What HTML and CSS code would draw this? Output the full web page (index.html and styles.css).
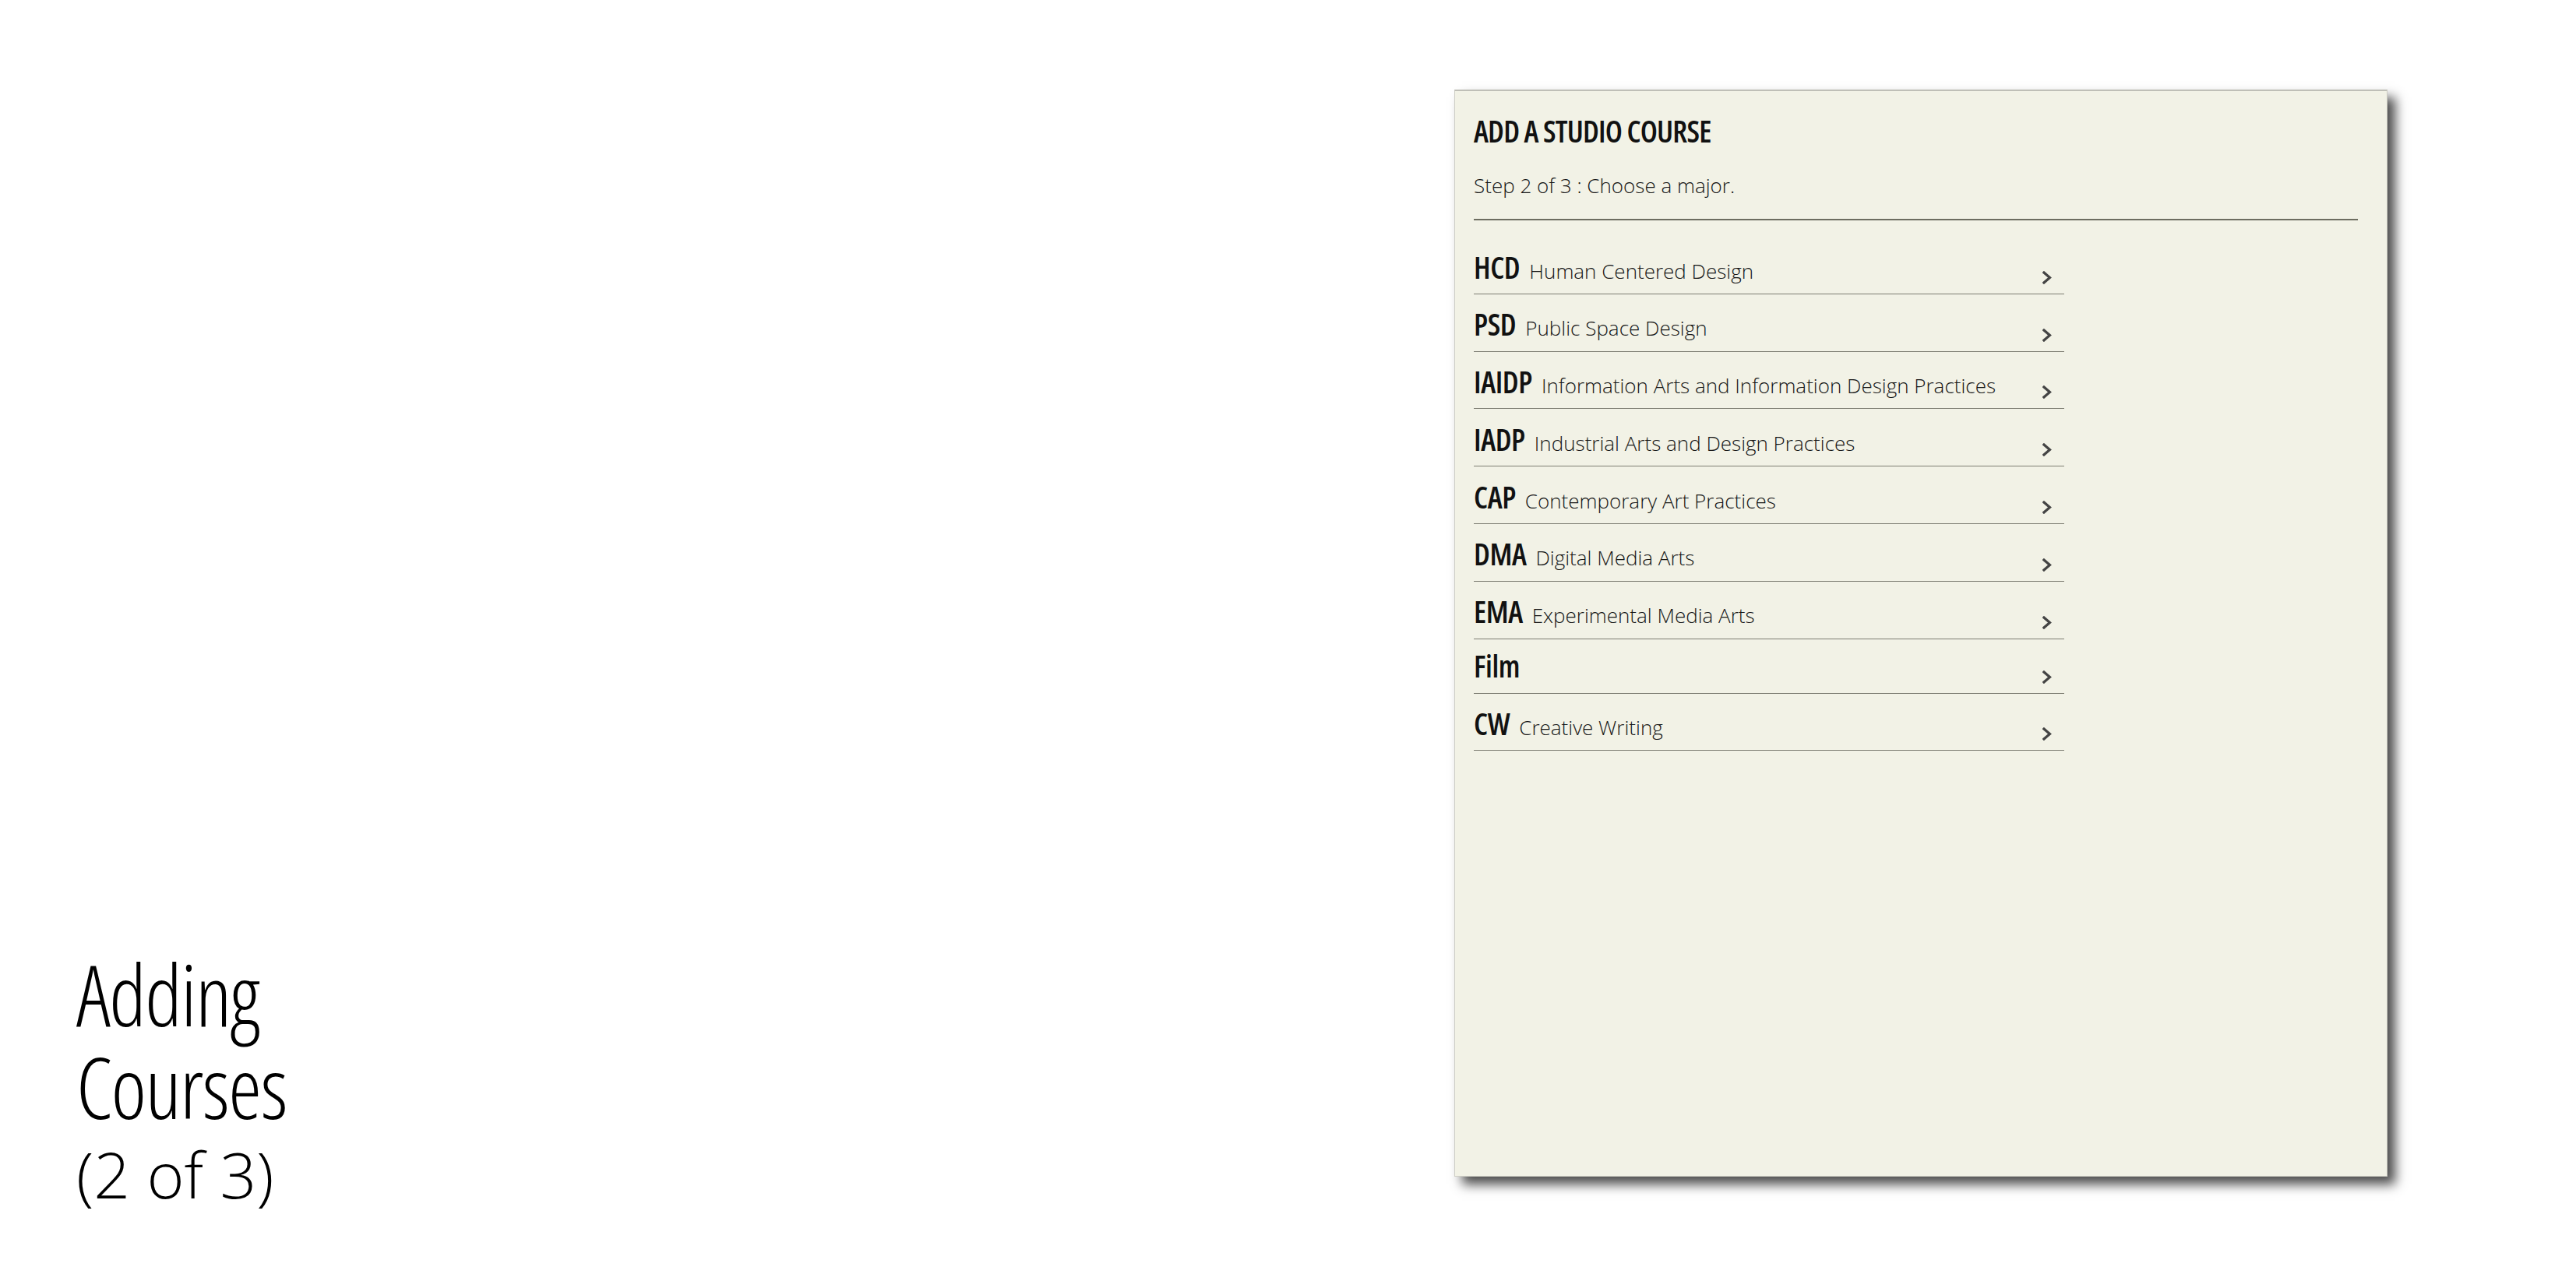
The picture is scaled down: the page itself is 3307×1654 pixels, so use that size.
FILE: index.html
```html
<!DOCTYPE html>
<html lang="en">
<head>
<meta charset="utf-8">
<title>Adding Courses (2 of 3)</title>
<link rel="stylesheet" href="styles.css">
</head>
<body>
<div class="slide">
  <div class="caption">
    <h1 class="caption-title">
      <span class="caption-main">Adding</span>
      <span class="caption-main">Courses</span>
      <span class="caption-sub">(2 of 3)</span>
    </h1>
  </div>

  <section class="panel">
    <header class="panel-head">
      <h2 class="panel-title">ADD A STUDIO COURSE</h2>
      <p class="panel-step">Step 2 of 3 : Choose a major.</p>
    </header>
    <ul class="majors">
      <li class="row"><span class="abbr">HCD</span><span class="desc">Human Centered Design</span><svg class="chev" viewBox="0 0 12 17" width="12" height="17"><polyline points="2,2 9.5,8.5 2,15"/></svg></li>
      <li class="row"><span class="abbr">PSD</span><span class="desc">Public Space Design</span><svg class="chev" viewBox="0 0 12 17" width="12" height="17"><polyline points="2,2 9.5,8.5 2,15"/></svg></li>
      <li class="row"><span class="abbr">IAIDP</span><span class="desc">Information Arts and Information Design Practices</span><svg class="chev" viewBox="0 0 12 17" width="12" height="17"><polyline points="2,2 9.5,8.5 2,15"/></svg></li>
      <li class="row"><span class="abbr">IADP</span><span class="desc">Industrial Arts and Design Practices</span><svg class="chev" viewBox="0 0 12 17" width="12" height="17"><polyline points="2,2 9.5,8.5 2,15"/></svg></li>
      <li class="row"><span class="abbr">CAP</span><span class="desc">Contemporary Art Practices</span><svg class="chev" viewBox="0 0 12 17" width="12" height="17"><polyline points="2,2 9.5,8.5 2,15"/></svg></li>
      <li class="row"><span class="abbr">DMA</span><span class="desc">Digital Media Arts</span><svg class="chev" viewBox="0 0 12 17" width="12" height="17"><polyline points="2,2 9.5,8.5 2,15"/></svg></li>
      <li class="row"><span class="abbr">EMA</span><span class="desc">Experimental Media Arts</span><svg class="chev" viewBox="0 0 12 17" width="12" height="17"><polyline points="2,2 9.5,8.5 2,15"/></svg></li>
      <li class="row row-solo"><span class="abbr">Film</span><svg class="chev" viewBox="0 0 12 17" width="12" height="17"><polyline points="2,2 9.5,8.5 2,15"/></svg></li>
      <li class="row"><span class="abbr">CW</span><span class="desc">Creative Writing</span><svg class="chev" viewBox="0 0 12 17" width="12" height="17"><polyline points="2,2 9.5,8.5 2,15"/></svg></li>
    </ul>
  </section>
</div>
</body>
</html>
```
FILE: styles.css
```css
html, body {
  margin: 0;
  padding: 0;
  background: #ffffff;
}

.slide {
  display: flex;
  align-items: flex-start;
  height: 1654px;
  box-sizing: border-box;
  padding: 0 242px 0 98px;
}

.caption {
  flex: 1;
  align-self: stretch;
  display: flex;
  flex-direction: column;
  justify-content: flex-end;
  padding-bottom: 106px;
}

.caption-title {
  margin: 0;
  font-weight: normal;
  color: #000;
}

.caption-main {
  display: block;
  font-family: "Open Sans", "DejaVu Sans Condensed", sans-serif;
  font-stretch: 75%;
  font-weight: 300;
  font-size: 108px;
  line-height: 119px;
  letter-spacing: -1.4px;
}

.caption-sub {
  display: block;
  margin-top: 11px;
  font-family: "Open Sans", sans-serif;
  font-weight: 300;
  font-size: 82px;
  line-height: 82px;
}

.panel {
  width: 1198px;
  height: 1396px;
  margin-top: 115px;
  box-sizing: border-box;
  background: #f2f2e6;
  border: 1px solid #cdcdc4;
  border-top: 2px solid #bfbfb7;
  box-shadow: 10px 10px 14px rgba(0, 0, 0, 0.7);
  padding: 0 37px 0 24px;
}

.panel-head {
  border-bottom: 2px solid #6d6d60;
  padding-bottom: 27px;
}

.panel-title {
  margin: 0;
  padding-top: 31px;
  font-family: "Open Sans", "DejaVu Sans Condensed", sans-serif;
  font-stretch: 75%;
  font-weight: 600;
  font-size: 39px;
  line-height: 40px;
  letter-spacing: -0.8px;
  color: #111;
}

.panel-step {
  margin: 34px 0 0 0;
  font-family: "Open Sans", sans-serif;
  font-weight: 300;
  font-size: 26px;
  line-height: 32px;
  color: #161616;
}

.majors {
  list-style: none;
  margin: 21px 0 0 0;
  padding: 0;
  width: 758px;
}

.row {
  display: flex;
  align-items: baseline;
  height: 73.8px;
  box-sizing: border-box;
  padding-top: 18.5px;
  border-bottom: 1px solid #7d7d72;
}

.row-solo {
  height: 70px;
  padding-top: 14.5px;
}

.abbr {
  font-family: "Open Sans", "DejaVu Sans Condensed", sans-serif;
  font-stretch: 75%;
  font-weight: 600;
  font-size: 39px;
  line-height: 40px;
  letter-spacing: -0.4px;
  color: #111;
}

.desc {
  margin-left: 12px;
  font-family: "Open Sans", sans-serif;
  font-weight: 300;
  font-size: 26px;
  line-height: 32px;
  color: #161616;
}

.chev {
  margin-left: auto;
  margin-right: 16px;
  margin-bottom: 12px;
  align-self: flex-end;
  fill: none;
  stroke: #444;
  stroke-width: 3.2;
  stroke-linecap: square;
  stroke-linejoin: miter;
}
```
